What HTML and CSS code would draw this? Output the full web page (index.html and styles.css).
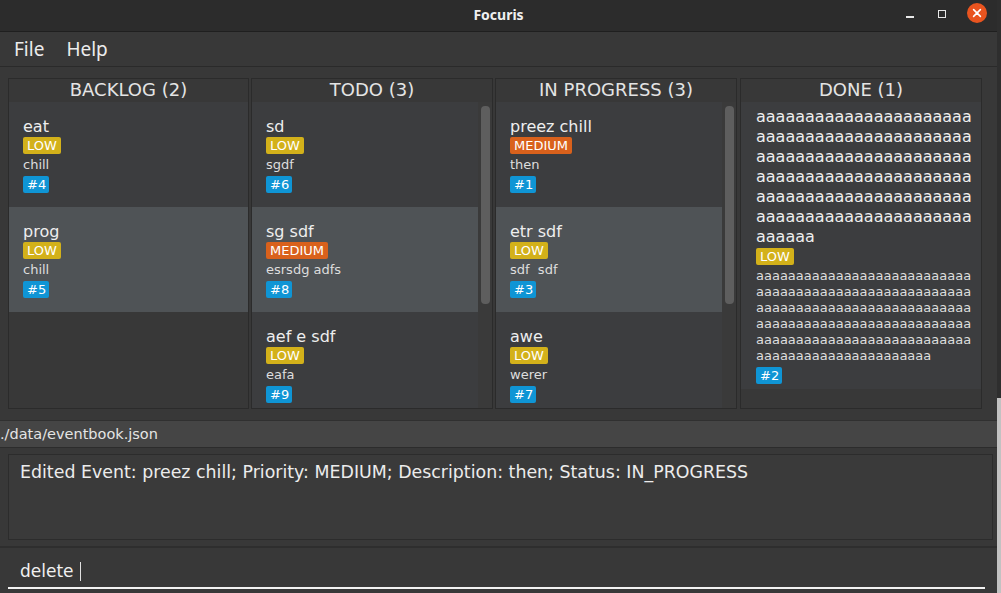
FILE: index.html
```html
<!DOCTYPE html>
<html>
<head>
<meta charset="utf-8">
<title>Focuris</title>
<link rel="stylesheet" href="styles.css">
</head>
<body>
<div class="window">
  <header class="titlebar">
    <span class="title">Focuris</span>
    <div class="controls">
      <span class="ctl min"></span>
      <span class="ctl max"></span>
      <span class="ctl close">
        <svg width="20" height="20" viewBox="0 0 20 20"><circle cx="10" cy="10" r="10" fill="#e9541f"/><path d="M6.6 6.6 L13.4 13.4 M13.4 6.6 L6.6 13.4" stroke="#fff" stroke-width="1.6" stroke-linecap="round"/></svg>
      </span>
    </div>
  </header>
  <nav class="menubar">
    <span class="menu">File</span>
    <span class="menu">Help</span>
  </nav>
  <main class="board">
    <section class="column">
      <div class="col-head">BACKLOG (2)</div>
      <div class="col-body">
        <div class="list">
          <div class="card">
            <div class="c-title">eat</div>
            <span class="tag low">LOW</span>
            <div class="c-desc">chill</div>
            <span class="tag id">#4</span>
          </div>
          <div class="card alt">
            <div class="c-title">prog</div>
            <span class="tag low">LOW</span>
            <div class="c-desc">chill</div>
            <span class="tag id">#5</span>
          </div>
        </div>
      </div>
    </section>
    <section class="column">
      <div class="col-head">TODO (3)</div>
      <div class="col-body">
        <div class="list">
          <div class="card">
            <div class="c-title">sd</div>
            <span class="tag low">LOW</span>
            <div class="c-desc">sgdf</div>
            <span class="tag id">#6</span>
          </div>
          <div class="card alt">
            <div class="c-title">sg sdf</div>
            <span class="tag med">MEDIUM</span>
            <div class="c-desc">esrsdg adfs</div>
            <span class="tag id">#8</span>
          </div>
          <div class="card">
            <div class="c-title">aef e sdf</div>
            <span class="tag low">LOW</span>
            <div class="c-desc">eafa</div>
            <span class="tag id">#9</span>
          </div>
        </div>
        <div class="scrollbar"><div class="thumb"></div></div>
      </div>
    </section>
    <section class="column">
      <div class="col-head">IN PROGRESS (3)</div>
      <div class="col-body">
        <div class="list">
          <div class="card">
            <div class="c-title">preez chill</div>
            <span class="tag med">MEDIUM</span>
            <div class="c-desc">then</div>
            <span class="tag id">#1</span>
          </div>
          <div class="card alt">
            <div class="c-title">etr sdf</div>
            <span class="tag low">LOW</span>
            <div class="c-desc">sdf&nbsp; sdf</div>
            <span class="tag id">#3</span>
          </div>
          <div class="card">
            <div class="c-title">awe</div>
            <span class="tag low">LOW</span>
            <div class="c-desc">werer</div>
            <span class="tag id">#7</span>
          </div>
        </div>
        <div class="scrollbar"><div class="thumb"></div></div>
      </div>
    </section>
    <section class="column">
      <div class="col-head">DONE (1)</div>
      <div class="col-body">
        <div class="list">
          <div class="card wide">
            <div class="c-title wrap">aaaaaaaaaaa<!-- -->aaaaaaaaaaa<!-- -->aaaaaaaaaaa<!-- -->aaaaaaaaaaa<!-- -->aaaaaaaaaaa<!-- -->aaaaaaaaaaa<!-- -->aaaaaaaaaaa<!-- -->aaaaaaaaaaa<!-- -->aaaaaaaaaaa<!-- -->aaaaaaaaaaa<!-- -->aaaaaaaaaaa<!-- -->aaaaaaaaaaa<!-- -->aaaaaa</div>
            <span class="tag low">LOW</span>
            <div class="c-desc wrap">aaaaaaaaa<!-- -->aaaaaaaaa<!-- -->aaaaaaaaa<!-- -->aaaaaaaaa<!-- -->aaaaaaaaa<!-- -->aaaaaaaaa<!-- -->aaaaaaaaa<!-- -->aaaaaaaaa<!-- -->aaaaaaaaa<!-- -->aaaaaaaaa<!-- -->aaaaaaaaa<!-- -->aaaaaaaaa<!-- -->aaaaaaaaa<!-- -->aaaaaaaaa<!-- -->aaaaaaaaa<!-- -->aaaaaaaaaaaaaaaaaaaaaa</div>
            <span class="tag id">#2</span>
          </div>
        </div>
      </div>
    </section>
  </main>
  <div class="statusbar">./data/eventbook.json</div>
  <div class="result-area">
    <div class="result">Edited Event: preez chill; Priority: MEDIUM; Description: then; Status: IN_PROGRESS</div>
  </div>
  <div class="command-area">
    <div class="command"><span class="cmd-text">delete</span><span class="caret"></span></div>
  </div>
</div>
</body>
</html>
```
FILE: styles.css
```css
* { box-sizing: border-box; }
html, body { margin: 0; padding: 0; }
body {
  width: 1001px;
  height: 593px;
  overflow: hidden;
  background: linear-gradient(to bottom, #2e2e2e 0, #2e2e2e 398px, #c2c2c2 398px, #c2c2c2 100%);
  font-family: "DejaVu Sans", sans-serif;
  color: #e6e6e6;
}
.window {
  display: flex;
  flex-direction: column;
  width: 997px;
  height: 593px;
  background: #383838;
}
.titlebar {
  height: 32px;
  background: #2c2c2c;
  border-bottom: 1px solid #1f1f1f;
  display: flex;
  align-items: center;
  justify-content: center;
  position: relative;
}
.title {
  font-family: "Noto Sans", sans-serif;
  font-weight: bold;
  font-size: 14px;
  color: #f0f0f0;
  margin-top: -3px;
}
.controls {
  position: absolute;
  right: 10px;
  top: 3px;
  display: flex;
  align-items: center;
}
.ctl { display: block; }
.min {
  width: 8px;
  height: 2px;
  background: #e8e8e8;
  margin-right: 24px;
  margin-top: 8px;
}
.max {
  width: 8px;
  height: 8px;
  border: 1.5px solid #e8e8e8;
  margin-right: 21px;
  margin-top: 1px;
}
.close { width: 20px; height: 20px; }
.close svg { display: block; }

.menubar {
  height: 35px;
  background: #383838;
  border-bottom: 1px solid #2a2a2a;
  display: flex;
  align-items: center;
  padding-left: 14px;
  gap: 22px;
}
.menu {
  font-family: "Noto Sans", sans-serif;
  font-size: 19px;
  color: #ececec;
  margin-top: 0;
}

.board {
  height: 353px;
  padding: 11px 12px 11px 8px;
  display: flex;
  gap: 2px;
  background: #383838;
}
.column {
  flex: none;
  width: 242px;
  border: 1px solid #2b2b2b;
  display: flex;
  flex-direction: column;
  background: #383838;
}
.column:first-child { width: 241px; }
.column:nth-child(4) { margin-left: 1px; }
.col-head {
  height: 23px;
  text-align: center;
  font-size: 18px;
  line-height: 22px;
  color: #e4e4e4;
}
.col-body {
  flex: 1;
  display: flex;
  min-height: 0;
  overflow: hidden;
}
.list {
  flex: 1;
  min-width: 0;
  display: flex;
  flex-direction: column;
}
.card {
  flex: none;
  min-height: 105px;
  padding: 5px 8px 5px 14px;
  background: #3c3d3f;
  display: flex;
  flex-direction: column;
  justify-content: center;
  align-items: flex-start;
}
.card.alt { background: #4f5356; }
.card.wide { padding-left: 15px; padding-right: 6px; }
.c-title {
  font-size: 16px;
  line-height: 20px;
  color: #eeeeee;
  margin-top: 1px;
  margin-bottom: 0;
}
.c-desc {
  font-size: 13px;
  line-height: 16px;
  color: #dedede;
  margin: 3px 0;
}
.wrap {
  word-break: break-all;
  width: 100%;
}
.c-title.wrap { margin-top: 0; margin-bottom: 1px; }
.tag {
  display: inline-block;
  font-size: 13px;
  line-height: 17px;
  height: 17px;
  padding: 0 4px;
  border-radius: 2px;
  color: #ffffff;
}
.tag.low { background: #d3b11a; }
.tag.med { background: #d9611c; }
.tag.id { background: #0f95d5; padding: 0 3px 0 4px; }

.scrollbar {
  flex: none;
  width: 14px;
  padding: 4px 3px 0 3px;
  background: #3a3a3a;
}
.thumb {
  width: 9px;
  height: 198px;
  border-radius: 4px;
  background: #5e5e5e;
}

.statusbar {
  height: 28px;
  background: #454545;
  border-top: 1px solid #303030;
  border-bottom: 1px solid #2c2c2c;
  font-size: 14.5px;
  line-height: 26px;
  color: #e4e4e4;
}
.result-area {
  height: 100px;
  padding: 6px 4px 6px 8px;
  background: #383838;
  border-bottom: 2px solid #2e2e2e;
}
.result {
  height: 100%;
  border: 1px solid #2c2c2c;
  background: #3a3a3a;
  padding: 7px 11px;
  font-size: 17.4px;
  line-height: 21px;
  color: #ececec;
}
.command-area {
  flex: 1;
  padding: 0 12px 4px 8px;
  background: #383838;
}
.command {
  height: 100%;
  border-bottom: 2px solid #f2f2f2;
  display: flex;
  align-items: center;
  padding-left: 12px;
  padding-top: 7px;
}
.cmd-text {
  font-size: 17px;
  color: #f0f0f0;
}
.caret {
  width: 1px;
  height: 19px;
  background: #e0e0e0;
  margin-left: 6px;
}
```
